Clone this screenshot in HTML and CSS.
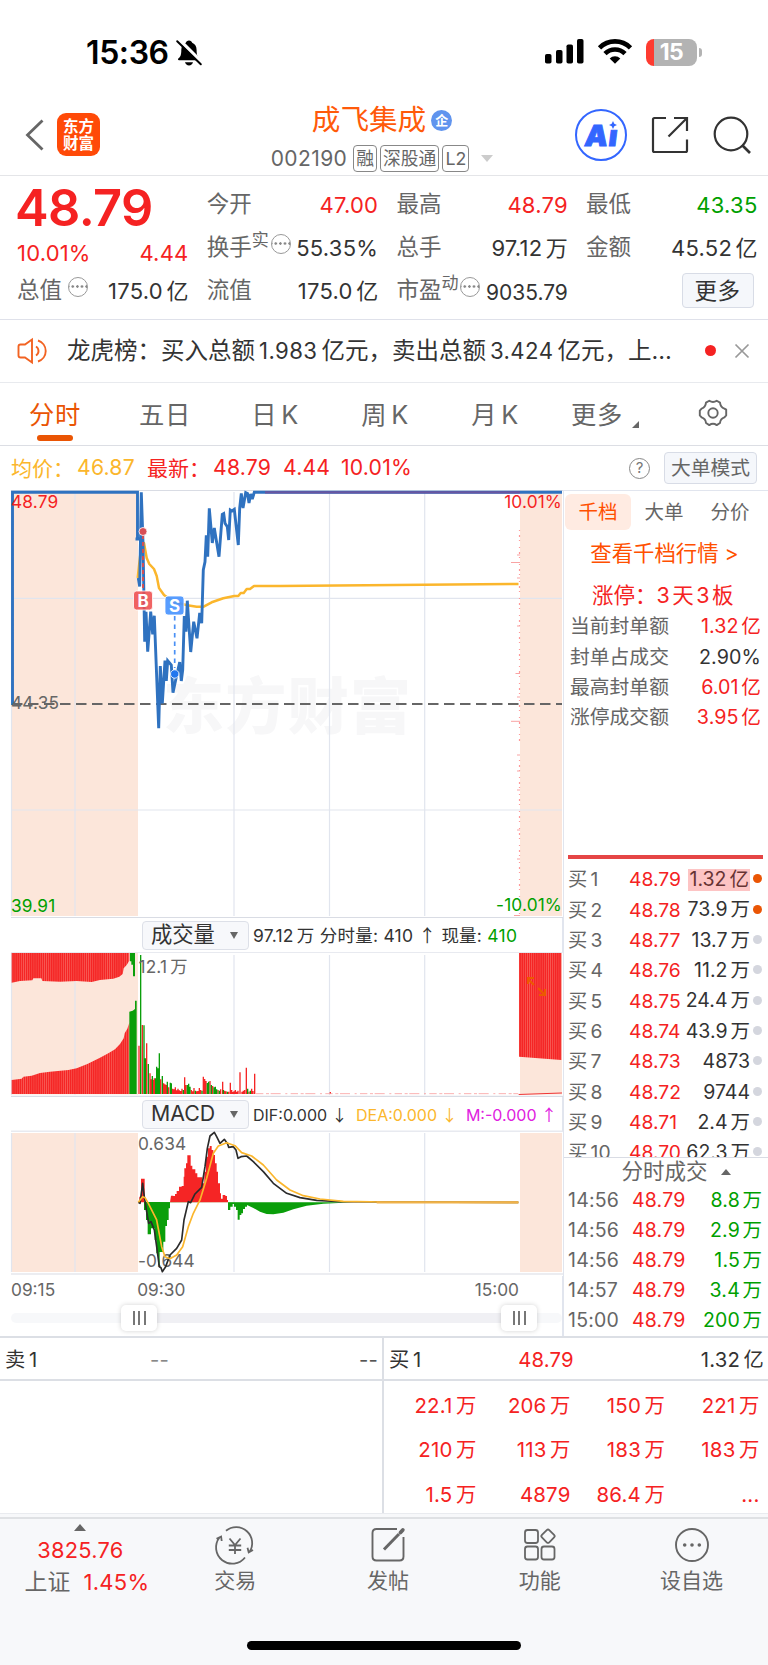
FILE: index.html
```html
<!DOCTYPE html>
<html lang="zh-CN">
<head>
<meta charset="utf-8">
<title>成飞集成 002190</title>
<link rel="stylesheet" href="styles.css">
</head>
<body>
<div class="statusbar">
  <span class="clock">15:36</span>
  <svg class="bell" width="26" height="28" viewBox="0 0 26 28"><path d="M13 1.500c1.700 0 2.900 1 3.200 2.300 3 1.300 4.400 3.900 4.400 7.200 0 5.300 1 7 3 8.600.7.700.3 1.700-.7 1.700H3c-1 0-1.400-1-.7-1.700 2-1.700 3-3.300 3-8.600 0-3.300 1.500-5.900 4.500-7.200C10.100 2.500 11.300 1.500 13 1.500z"/><path d="M9 23.300h8c-.5 2-2 3.200-4 3.200s-3.500-1.200-4-3.200z"/><path d="M3 .5l23 23" stroke="#fff" stroke-width="3.500"/><path d="M1.200 2.200l23.600 23" stroke="#000" stroke-width="2" stroke-linecap="round"/></svg>
  <svg class="signal" width="40" height="26" viewBox="0 0 40 26"><rect x="1" y="15" width="6.500" height="9.500" rx="1.800"/><rect x="12" y="11" width="6.500" height="13.500" rx="1.800"/><rect x="22.500" y="5.500" width="6.500" height="19" rx="1.800"/><rect x="33" y="0" width="6.500" height="24.500" rx="1.800"/></svg>
  <svg class="wifi" width="36" height="26" viewBox="0 0 36 26"><path d="M2.500 8.800a22 22 0 0 1 31 0M8 14.600a14.200 14.200 0 0 1 20 0" fill="none" stroke="#000" stroke-width="4.600"/><path d="M18 24.800l-5.300-5.400a7.600 7.600 0 0 1 10.600 0z"/></svg>
  <span class="battery"><b>15</b></span><span class="battery-cap"></span>
</div>

<header class="header">
  <svg class="back" width="20" height="34" viewBox="0 0 20 34"><path d="M17.500 2.500L2.500 17l15 14.500" fill="none" stroke="#666" stroke-width="2.800"/></svg>
  <div class="logo"><span>东方</span><span>财富</span></div>
  <div class="stock">
    <div class="stock-name"><span>成飞集成</span><span class="corp">企</span></div>
    <div class="stock-code"><span class="code">002190</span><span class="tag">融</span><span class="tag">深股通</span><span class="tag">L2</span><i class="caret"></i></div>
  </div>
  <div class="ai"><span class="ai-text">Aı</span><svg width="8" height="8" viewBox="0 0 8 8"><path d="M4 0l1.300 2.700L8 4 5.300 5.300 4 8 2.700 5.300 0 4l2.700-1.300z" fill="#3366ff"/></svg></div>
  <svg class="share" width="38" height="38" viewBox="0 0 38 38"><path d="M15 2H3.500Q2 2 2 3.500v31Q2 36 3.500 36h31q1.500 0 1.500-1.500V23.500M23 2h13v13M36 2L17.500 20.500" fill="none" stroke="#333" stroke-width="2.200"/></svg>
  <svg class="search" width="38" height="38" viewBox="0 0 38 38"><circle cx="18" cy="18" r="16.300" fill="none" stroke="#333" stroke-width="2.200"/><path d="M29 29l8 8" stroke="#333" stroke-width="2.600"/></svg>
</header>

<section class="quote">
  <div class="qcol">
    <div class="price">48.79</div>
    <div class="chg red"><span>10.01%</span><span>4.44</span></div>
    <div class="q"><span class="l">总值<em class="dots"></em></span><span>175.0<i>亿</i></span></div>
  </div>
  <div class="qcol">
    <div class="q"><span class="l">今开</span><span class="red">47.00</span></div>
    <div class="q"><span class="l">换手<sup>实</sup><em class="dots"></em></span><span>55.35%</span></div>
    <div class="q"><span class="l">流值</span><span>175.0<i>亿</i></span></div>
  </div>
  <div class="qcol">
    <div class="q"><span class="l">最高</span><span class="red">48.79</span></div>
    <div class="q"><span class="l">总手</span><span>97.12<i>万</i></span></div>
    <div class="q"><span class="l">市盈<sup>动</sup><em class="dots"></em></span><span class="pe">9035.79</span></div>
  </div>
  <div class="qcol">
    <div class="q"><span class="l">最低</span><span class="green">43.35</span></div>
    <div class="q"><span class="l">金额</span><span>45.52<i>亿</i></span></div>
    <div class="q end"><span class="more">更多</span></div>
  </div>
</section>

<section class="notice">
  <svg width="32" height="26" viewBox="0 0 32 26"><path d="M15 1.500v23l-7-5H3.500q-2 0-2-2v-9q0-2 2-2H8zM19 8.500a5.300 5.300 0 0 1 0 9M21 2.500a11 11 0 0 1 0 21" fill="none" stroke="#f26322" stroke-width="1.900"/></svg>
  <p>龙虎榜：买入总额<i>1.983</i><i>亿元，卖出总额</i><i>3.424</i><i>亿元，上…</i></p>
  <b class="unread"></b>
  <svg class="close" width="16" height="16" viewBox="0 0 16 16"><path d="M1.500 1.500l13 13M14.500 1.500l-13 13" stroke="#999" stroke-width="1.700"/></svg>
</section>

<nav class="tabs">
  <span class="on">分时</span><span>五日</span><span>日<i>K</i></span><span>周<i>K</i></span><span>月<i>K</i></span><span class="tabmore">更多<b></b></span>
  <span class="gear"><svg width="30" height="28" viewBox="0 0 30 28"><path d="M11.300 1.700q3.700 2.600 7.400 0l3.300 1.900q.4 4.600 4.400 6l1.800 1v5.800l-1.800 2q-4 1.300-4.400 5.600l-3.300 2.100q-3.700-2.600-7.400 0L8 24q-.4-4.300-4.400-5.600l-1.800-2v-4.800l1.800-2q4-1.400 4.400-6z" fill="none" stroke="#666" stroke-width="1.900" stroke-linejoin="round"/><circle cx="15" cy="14" r="4.700" fill="none" stroke="#666" stroke-width="1.900"/></svg></span>
</nav>

<div class="info">
  <span class="avg">均价：</span><span class="avg num">46.87</span><span class="red lab">最新：</span><span class="red num">48.79</span><span class="red num n2">4.44</span><span class="red num">10.01%</span>
  <span class="help">?</span><span class="mode">大单模式</span>
</div>

<main class="board">
  <div class="charts">
    <svg class="block" width="563" height="428" viewBox="0 490 563 428">
      <g class="wm"><text x="163" y="729" textLength="248">东方财富</text></g>
      <rect class="pink" x="12" y="492" width="126" height="424"/><rect class="pink" x="520" y="492" width="42" height="424"/>
      <path class="grid" d="M11.500 490v426M75 492v424M234 492v424M329.500 492v424M424.700 492v424M12 598.400h550M12 810h550"/>
      <path class="edge" d="M11 490.500h552M11 917.500h552"/>
      <path d="M519.500 530v214M519.500 760v156" stroke="#f99" stroke-width="1.200" stroke-dasharray="1 4 2 3 1 6"/>
      <path d="M511 562.500h9M515.500 673.500h4.500M511 721.300h9M517 555h3M517 578h3M517 626h3M517 697h3M517 755h3M517 771h3M517 790h3M517 830h3M517 859h3M514 915.500h6" stroke="#f9a3a3" stroke-width="1"/>
      <path d="M12 704h550" stroke="#666" stroke-width="1.800" stroke-dasharray="10.500 5.500"/>
      <path class="avgline" d="M137.700 578l2.300-21 2-14h2l2.700 15 2.600 6 4.700 5 2.700 7 2.300 12 5 7 10 7 13.300 3.300 9.400 1.400h7l8-4.400 11.600-4 11-2.300h4l2.400-3h3l3-4h3.300l4-3H280l238.500-2"/>
      <path class="priceline" d="M12.500 705V492.300H137.500V539H141M137.500 539h-2M138.300 578l1.400 8.600 1.600-94.300 1.700 50 1.700 99.400 1.300-30 1.700 40 3-40 2 22.600 1.600-18.600L158.700 728.300 160.300 666 162.300 703.300 165 660.700 166.300 681 167.700 660.700 171.300 665 173 692.700 176.300 677 179.700 662 181.300 681 182.700 670 184.300 616 186 631.700 187.300 600.700 190.700 652 193.700 621.700 197 638.300 199.700 613 201.700 623.300 203.300 570 205 561.700 206.300 535.300 207.700 556.700 209.300 508.300 212.300 543 214.300 528 219 556.700 222.300 514.300 223.700 513.500 225 523.300 227.300 526.700 228.700 540 230.300 510 232 511 234.300 509.300 238.300 545 239.700 508 241.300 493.300 243 508 245.700 492.700 247.500 493.500 249 503 250.700 494 252.300 499 254.300 492.300H562"/>
      <path d="M265 492.300H520" stroke="#6a55a0" stroke-width="2.200"/>
      <path d="M143 535v56" stroke="#e04b4b" stroke-width="1.800" stroke-dasharray="4 3"/><circle cx="143" cy="531.500" r="4" fill="#d84e55" stroke="#fff" stroke-width=".8"/>
      <path d="M174.700 616v52" stroke="#4a90f5" stroke-width="1.700" stroke-dasharray="4.500 4"/><circle cx="174.700" cy="674" r="4.200" fill="#2277ee" stroke="#fff" stroke-width=".8"/>
      <rect x="133.500" y="591" width="19" height="19" rx="3" fill="#ee4f4f" fill-opacity=".88" stroke="#fff" stroke-width=".8"/><text class="mk" x="143" y="607.300">B</text>
      <rect x="165" y="596" width="19" height="19" rx="3" fill="#4a95ff" fill-opacity=".92" stroke="#fff" stroke-width=".8"/><text class="mk" x="174.500" y="612.300">S</text>
      <text class="ax r" x="11" y="507.700">48.79</text><text class="ax" x="11" y="709">44.35</text><text class="ax g" x="11" y="911.500">39.91</text>
      <text class="ax r e" x="562" y="508">10.01%</text><text class="ax g e" x="562" y="911.300">-10.01%</text>
    </svg>

    <div class="chead"><span class="select">成交量<b></b></span><span class="vtext">97.12<i>万</i> 分时量: 410 <u>↑</u> 现量: <span class="green">410</span></span></div>

    <svg class="block" width="563" height="145" viewBox="0 952 563 145">
      <defs>
        <pattern id="stripe" width="6.300" height="30" patternUnits="userSpaceOnUse"><rect width="6.300" height="30" fill="#f52525"/><rect width="1.500" height="30" fill="#f97068"/></pattern>
      </defs>
      <rect class="pink" x="12" y="953" width="126" height="141.500"/><rect class="pink" x="520" y="953" width="42" height="141.500"/>
      <path class="grid" d="M11.500 953v142M75 953v142M234 955v140M329.500 955v140M424.700 955v140"/>
      <path d="M11 952.500h552" stroke="#e8eaf0"/><path class="edge" d="M11 1096.300h552"/>
      <g transform="translate(0 900) scale(.33333)">
        <path fill="url(#stripe)" d="M35 159H388V182L380 195 371 205 368 222 358 230 340 236 300 240 275 246 230 243 180 245 127 243 124 235H100L97 241 60 243 35 248zM35 582V540L65 536 70 530 95 527 120 519 150 515 205 510 230 505 262 492 300 473 325 460 345 448 360 432 371 415 374 400 382 386 388 368V582zM1557 159h127V480l-127-10z"/>
        <path d="M390 159h15v70h-6v-35h-5v-10h-4zM388 582V335l10-3 7-5V302h5V582z" fill="#0a9e0a"/>
        <path stroke="#f52525" stroke-width="4" fill="none" d="M417 582V437M427 582V375M440 582V430M450 582V520M454 582V538M459 582V540M463 582V535M482 582V538M491 582V550M495 582V553M499 582V555M506 582V562M518 582V566M522 582V568M526 582V562M530 582V571M534 582V566M538 582V571M542 582V573M546 582V566M554 582V532M558 582V555M574 582V570M578 582V574M582 582V564M590 582V574M594 582V573M598 582V564M602 582V570M610 582V530M614 582V537M618 582V543M630 582V543M638 582V558M654 582V570M662 582V568M668 582V545M674 582V572M678 582V574M686 582V575M691 582V548M695 582V570M698 582V576M702 582V574M706 582V570M710 582V575M714 582V572M720 582V517M726 582V575M730 582V572M734 582V570M739 582V503M747 582V575M755 582V566M759 582V573M764 582V521M991 582V576"/>
        <path stroke="#0a9e0a" stroke-width="4" fill="none" d="M422 582V165M432 582V376M436 582V475M445 582V492M457 582V528M467 582V535M470 582V500M474 582V505M478 582V460M487 582V528M502 582V545M511 582V548M514 582V550M550 582V570M562 582V555M566 582V551M570 582V560M586 582V572M606 582V572M622 582V549M626 582V545M634 582V555M642 582V562M646 582V560M650 582V568M658 582V572M670 582V570M682 582V575M743 582V566M751 582V572"/>
        <path d="M768 581H1555" stroke="#f9a0a0" stroke-width="2.500" stroke-dasharray="22 8 9 5 30 14 6 10"/>
        <path d="M1556 583.500L1686 579" stroke="#e33" stroke-width="3"/>
      </g>
      <path d="M534 985l-6-6M528 984v-6h6M538 988l7 7M545 989v6h-6" fill="none" stroke="#ec5a00" stroke-width="2"/>
      <text class="ax" x="138.500" y="972.500">12.1<tspan dx="3">万</tspan></text>
    </svg>

    <div class="chead"><span class="select">MACD<b></b></span><span class="mtext"><span>DIF:0.000 <u>↓</u></span><span class="dea">DEA:0.000 <u>↓</u></span><span class="mm">M:-0.000 <u>↑</u></span></span></div>

    <svg class="block" width="563" height="145" viewBox="0 1131 563 145">
      <rect class="pink" x="12" y="1133" width="126" height="139"/><rect class="pink" x="520" y="1133" width="42" height="139"/>
      <path class="grid" d="M11.500 1133v139M75 1133v139M234 1133v139M329.500 1133v139M424.700 1133v139"/>
      <path d="M11 1131.300h552" stroke="#e8eaf0" stroke-width="1.400"/><path class="edge" d="M11 1274h552"/>
      <text class="ax" x="138" y="1150">0.634</text><text class="ax" x="138" y="1266.500">-0.644</text>
      <g transform="translate(0 900) scale(.33333)" stroke-linejoin="round">
        <path fill="#f52525" d="M418 907V890H423V836H434V907zM510 907L513 887H520V888H525V882H530V873H537V860H545V858H551V830H553V805H558V790H562V766H572V797H577V808H586V820H592V832H607V850H613V815H618V770H624V745H629V738H635V750H640V765H645V790H650V815H654V850H660V880H663V896H668V885H676V888H681V900H684V907z"/>
        <path fill="#0a9e0a" d="M432 906V930H438V960H443V1003H453V985H464V1020H469V1060H474V1095H479V1056H490V1025H496V978H501V960H506V925H510V907H684V930H691V920H698V912H702V920H708V930H713V959H719V945H724V940H729V927H735V920H741V915L760 924 780 935 800 942 820 943 850 938 880 928 920 917 970 911 1060 907z"/>
        <path fill="none" stroke="#2b2b2b" stroke-width="5" d="M415 907L420 910 428 850 433 890 440 935 446 970 453 965 463 990 470 1040 478 1100 483 1103 487 1115 497 1100 510 1065 530 1045 545 1020 552 960 565 905 572 908 585 882 605 862 615 800 622 745 630 708 643 697 650 710 660 730 673 718 683 732 686 742 700 740 708 750 714 775 723 770 740 768 760 785 790 815 820 850 860 880 900 893 950 901 1020 905 1555 907"/>
        <path fill="none" stroke="#fbb62c" stroke-width="5" d="M415 907L428 890 435 893 445 910 470 960 485 1040 495 1070 510 1076 530 1065 548 1040 565 980 580 940 600 900 620 835 640 760 655 738 680 728 705 737 725 758 755 768 790 795 830 840 870 870 910 887 960 897 1030 904 1150 906 1555 907"/>
        <path fill="none" stroke="#efb24a" stroke-width="7" d="M1130 907H1555"/>
      </g>
    </svg>
    <div class="times"><span>09:15</span><span>09:30</span><span>15:00</span></div>
    <div class="slider"><span class="h1"></span><span class="h2"></span></div>
  </div>

  <aside class="side">
    <div class="stabs"><span class="on">千档</span><span>大单</span><span>分价</span></div>
    <div class="link">查看千档行情 &gt;</div>
    <div class="limit red">涨停：3<i>天</i><i>3</i><i>板</i></div>
    <div class="kv"><span>当前封单额</span><b class="red">1.32<i>亿</i></b></div>
    <div class="kv"><span>封单占成交</span><b>2.90%</b></div>
    <div class="kv"><span>最高封单额</span><b class="red">6.01<i>亿</i></b></div>
    <div class="kv"><span>涨停成交额</span><b class="red">3.95<i>亿</i></b></div>
    <div class="redbar"></div>
    <div class="book">
      <div class="o"><span>买<i>1</i></span><b>48.79</b><em class="hl">1.32<i>亿</i></em><s class="hot"></s></div>
      <div class="o"><span>买<i>2</i></span><b>48.78</b><em>73.9<i>万</i></em><s class="hot"></s></div>
      <div class="o"><span>买<i>3</i></span><b>48.77</b><em>13.7<i>万</i></em><s></s></div>
      <div class="o"><span>买<i>4</i></span><b>48.76</b><em>11.2<i>万</i></em><s></s></div>
      <div class="o"><span>买<i>5</i></span><b>48.75</b><em>24.4<i>万</i></em><s></s></div>
      <div class="o"><span>买<i>6</i></span><b>48.74</b><em>43.9<i>万</i></em><s></s></div>
      <div class="o"><span>买<i>7</i></span><b>48.73</b><em>4873</em><s></s></div>
      <div class="o"><span>买<i>8</i></span><b>48.72</b><em>9744</em><s></s></div>
      <div class="o"><span>买<i>9</i></span><b>48.71</b><em>2.4<i>万</i></em><s></s></div>
      <div class="o"><span>买<i>10</i></span><b>48.70</b><em>62.3<i>万</i></em><s></s></div>
    </div>
    <div class="thead">分时成交<b></b></div>
    <div class="t"><span>14:56</span><b>48.79</b><em>8.8<i>万</i></em></div>
    <div class="t"><span>14:56</span><b>48.79</b><em>2.9<i>万</i></em></div>
    <div class="t"><span>14:56</span><b>48.79</b><em>1.5<i>万</i></em></div>
    <div class="t"><span>14:57</span><b>48.79</b><em>3.4<i>万</i></em></div>
    <div class="t"><span>15:00</span><b>48.79</b><em>200<i>万</i></em></div>
  </aside>
</main>

<section class="queue">
  <div class="half">
    <div class="qh"><span>卖<i>1</i></span><span class="dash">--</span><span class="dash d2">--</span></div>
  </div>
  <div class="half">
    <div class="qh"><span>买<i>1</i></span><span class="red">48.79</span><span>1.32<i>亿</i></span></div>
    <div class="cells red">
      <span>22.1<i>万</i></span><span>206<i>万</i></span><span>150<i>万</i></span><span>221<i>万</i></span>
      <span>210<i>万</i></span><span>113<i>万</i></span><span>183<i>万</i></span><span>183<i>万</i></span>
      <span>1.5<i>万</i></span><span>4879</span><span>86.4<i>万</i></span><span>...</span>
    </div>
  </div>
</section>

<footer class="nav">
  <div class="index"><b class="up"></b><span class="red">3825.76</span><span>上证<i class="red">1.45%</i></span></div>
  <div class="ni"><svg width="40" height="36" viewBox="0 0 40 36"><g fill="none" stroke="#666" stroke-width="1.800"><path d="M11 3.800A16 16 0 0 1 34.500 25M30 30.500A16 16 0 0 1 4.500 10.500M1.500 11.800l4.600-2.300 .6 4.500M38 23l-4.300 2.300-1.200-4.500"/><path d="M14.500 11.500l5.500 6.500 5.500-6.500M13.800 18.500h12.400M13.800 23h12.400M20 18v9"/></g></svg><span>交易</span></div>
  <div class="ni"><svg width="40" height="36" viewBox="0 0 40 36"><path d="M29 2H8.500Q4.500 2 4.500 6v23.500q0 4 4 4h23q4 0 4-4V10" fill="none" stroke="#666" stroke-width="1.900"/><path d="M16 22.500L31 7" stroke="#666" stroke-width="3"/><path d="M32.500 5.500l2.300-2.500" stroke="#666" stroke-width="3.800" stroke-linecap="round"/></svg><span>发帖</span></div>
  <div class="ni"><svg width="40" height="36" viewBox="0 0 40 36"><g fill="none" stroke="#666" stroke-width="1.800"><rect x="5" y="3" width="13" height="13" rx="2.500"/><rect x="5" y="19.500" width="13" height="13" rx="2.500"/><rect x="21.500" y="19.500" width="13" height="13" rx="2.500"/><rect x="22.800" y="4" width="10.400" height="10.400" rx="1.800" transform="rotate(45 28 9.200)"/></g></svg><span>功能</span></div>
  <div class="ni"><svg width="40" height="36" viewBox="0 0 40 36"><circle cx="20" cy="18" r="16" fill="none" stroke="#666" stroke-width="1.900"/><g fill="#666"><circle cx="12.700" cy="18" r="1.800"/><circle cx="20" cy="18" r="1.800"/><circle cx="27.300" cy="18" r="1.800"/></g></svg><span>设自选</span></div>
  <div class="home"></div>
</footer>
</body>
</html>
```

FILE: styles.css
```css
* { box-sizing: border-box; }
body { margin: 0; width: 768px; height: 1665px; overflow: hidden; background: #fff; color: #333; font-family: Inter, "Noto Sans CJK SC", sans-serif; font-size: 20px; line-height: 1; white-space: nowrap; }
i, em, u, s { font-style: normal; text-decoration: none; }
i { margin-left: .17em; }
p { margin: 0; }
svg { display: block; flex: none; overflow: visible; }
.red { color: #f52222; }
.green { color: #00a000; }

.statusbar { height: 96px; display: flex; align-items: center; padding: 8px 0 0 86px; }
.clock { width: 90px; padding-top: 2px; font-size: 32px; font-weight: 600; color: #000; letter-spacing: -.4px; }
.bell { margin-top: 2px; }
.signal { margin-left: 342px; }
.wifi { margin-left: 13px; }
.battery { margin-left: 13px; width: 51px; height: 27px; border-radius: 8px; background: linear-gradient(90deg, #fe3b30 8px, #b3b3b3 8px); color: #fff; font-size: 23px; text-align: center; line-height: 27px; letter-spacing: -.5px; }
.battery b { font-weight: 700; }
.battery-cap { width: 3px; height: 9px; margin-left: 2px; border-radius: 0 4px 4px 0; background: #b3b3b3; }

.header { height: 80px; display: flex; align-items: flex-start; border-bottom: 1px solid #e4e5e8; }
.back { margin: 22px 0 0 25px; }
.logo { margin: 17px 0 0 12px; width: 43px; height: 43px; border-radius: 9px; background: #ff4a08; color: #fff; font: 700 15.500px/17px "Noto Sans CJK SC", sans-serif; display: flex; flex-direction: column; align-items: center; padding-top: 4px; }
.stock { width: 300px; margin-left: 132px; display: flex; flex-direction: column; align-items: center; padding-top: 8px; }
.stock-name { display: flex; align-items: center; font-size: 28.600px; height: 32px; color: #ff5a0a; }
.corp { width: 21px; height: 21px; margin-left: 5px; border-radius: 50%; background: #6094ee; color: #fff; font-size: 13px; font-weight: 700; line-height: 20px; text-align: center; }
.stock-code { display: flex; align-items: center; height: 28px; margin-top: 8px; color: #666; }
.code { font-size: 21px; margin-right: 6px; letter-spacing: .4px; }
.tag { height: 27px; border: 1.500px solid #888; border-radius: 4px; padding: 0 2px; margin-right: 3px; font-size: 17.800px; line-height: 25px; }
.caret { border: 6px solid transparent; border-top: 7px solid #ccc; border-bottom: 0; margin-left: 9px; }
.ai { position: relative; width: 52px; height: 52px; margin-left: 43px; margin-top: 13px; border: 2.500px solid #3366ff; border-radius: 50%; color: #3366ff; font: 900 29px/49px Inter, sans-serif; }
.ai-text { display: block; margin-left: 8px; transform: skewX(-7deg); letter-spacing: 1px; -webkit-text-stroke: 1px #3366ff; }
.ai svg { position: absolute; right: 8px; top: 10px; }
.share { margin: 20px 0 0 24px; }
.search { margin: 20px 0 0 24px; }

.quote { height: 144px; display: flex; gap: 18.200px; padding: 7px 0 0 17px; border-bottom: 1px solid #dfe1ea; }
.qcol { width: 171.500px; font-size: 22px; }
.q { height: 43px; display: flex; align-items: center; justify-content: space-between; letter-spacing: .25px; }
.q i { font-size: 22px; margin-left: 3.500px; letter-spacing: 0; }
.l { display: flex; align-items: center; color: #666; font-size: 22.500px; letter-spacing: 0; }
.l sup { font-size: 17px; line-height: 1; margin-bottom: 14px; }
.dots { width: 20px; height: 20px; margin: 0 0 7px 2px; border: 1.500px solid #999; border-radius: 50%; background: radial-gradient(circle, #888 1px, transparent 1.500px) 0 0 / 4.600px 17px; background-position: 1.500px 0; background-repeat: repeat-x; }
.qcol:first-child .dots { margin-left: 6px; }
.pe { font-size: 21px; padding-top: 3px; letter-spacing: 0; }
.price { height: 53px; font-size: 50.500px; font-weight: 600; line-height: 50px; color: #f52222; letter-spacing: -.6px; margin-left: -2px; }
.chg { height: 33px; display: flex; justify-content: space-between; align-items: center; letter-spacing: .2px; padding-top: 1px; }
.end { justify-content: flex-end; padding-right: 4px; }
.more { width: 72px; height: 35px; line-height: 33px; text-align: center; border: 1px solid #d8dce6; border-radius: 4px; background: #f5f7fb; font-size: 22.500px; letter-spacing: .5px; }

.notice { height: 63px; display: flex; align-items: center; padding: 0 18px 1px 17px; border-bottom: 1.500px solid #e8eaee; }
.notice p { width: 622px; margin-left: 18px; font-size: 23.500px; }
.notice i { margin-left: 4px; }
.notice i:nth-child(odd) { font-size: 22.200px; letter-spacing: .4px; }
.unread { width: 11px; height: 11px; border-radius: 50%; background: #f52222; margin-left: 18px; }
.close { margin-left: 18px; }

.tabs { height: 63px; display: grid; grid-template-columns: repeat(7, 110px); border-bottom: 1px solid #dcdee4; color: #666; font-size: 25.300px; }
.tabs > span { display: flex; align-items: center; justify-content: center; padding-top: 1px; position: relative; letter-spacing: .6px; }
.tabs > .gear { padding: 0 4px 2px 0; }
.tabs i { margin-left: 4px; }
.tabs .on { color: #ea5504; }
.tabs .on::after { content: ""; position: absolute; left: 37px; top: 52px; width: 36px; height: 5.500px; border-radius: 3px; background: #ea5504; }
.tabmore b { border: solid transparent; border-width: 0 0 7px 7px; border-bottom-color: #666; margin: 19px 0 0 9px; }

.info { height: 44px; display: flex; align-items: center; padding: 0 11px 0 11px; font-size: 21px; }
.avg { color: #fbb62c; }
.info .num { width: 70px; font-size: 21.200px; letter-spacing: .2px; }
.info .avg { width: 66px; }
.info .avg.num { width: 70px; }
.lab { width: 66px; }
.info .n2 { width: 58px; }
.help { margin-left: auto; width: 21px; height: 21px; border: 1.500px solid #888; border-radius: 50%; color: #777; font-size: 15px; line-height: 18px; text-align: center; }
.mode { margin-left: 14px; width: 93px; height: 32px; line-height: 30px; text-align: center; border: 1px solid #d8dce6; border-radius: 4px; background: #f5f7fb; color: #666; font-size: 19.800px; }

.board { height: 846px; display: flex; }
.charts { width: 563px; }
.pink { fill: #fce6da; }
.grid { stroke: #e1e5ee; stroke-width: 1.200; fill: none; }
.edge { stroke: #d9dce4; stroke-width: 1.200; fill: none; }
.wm text { font: 900 61px "Noto Sans CJK SC", sans-serif; fill: #f7f7f8; }
.avgline { fill: none; stroke: #fbb62c; stroke-width: 2.500; stroke-linejoin: round; }
.priceline { fill: none; stroke: #2f72c0; stroke-width: 2.900; stroke-linejoin: miter; stroke-miterlimit: 3; }
.mk { font: 700 17px Inter, sans-serif; fill: #fff; text-anchor: middle; }
.ax { font-size: 17.300px; letter-spacing: .15px; fill: #666; }
.r { fill: #f52222; }
.g { fill: #00a000; }
.e { text-anchor: end; }
.chead { height: 34px; display: flex; align-items: center; padding-left: 142px; border-right: 1px solid #e1e5ee; }
.select { flex: none; width: 107px; height: 29px; display: flex; align-items: center; padding-left: 8px; border: 1px solid #dde0e8; border-radius: 4px; background: #f7f8fb; font-size: 21.300px; position: relative; }
.select b { position: absolute; right: 10px; top: 10px; border: 4.500px solid transparent; border-top: 7.500px solid #666; border-bottom: 0; }
.vtext { margin-left: 4px; font-size: 17.500px; letter-spacing: .25px; padding-top: 1px; }
.mtext { margin-left: 4px; width: 304px; display: flex; justify-content: space-between; font-size: 16px; }
u { font-family: "Noto Sans CJK SC", sans-serif; }
.dea { color: #fbb62c; }
.mm { color: #e020e0; }
.times { height: 24px; display: flex; align-items: center; padding: 3px 43px 0 11px; font-size: 17.300px; color: #666; border-right: 1px solid #e1e5ee; }
.times span:nth-child(2) { margin: 0 auto 0 82px; }
.slider { height: 36px; display: flex; align-items: center; padding: 0 0 0 11px; position: relative; border-right: 1px solid #e1e5ee; }
.slider::before { content: ""; width: 551px; height: 10px; border-radius: 5px; background: linear-gradient(90deg, #f7f8fa 120px, #f0f0f4 120px, #f0f0f4 510px, #f7f8fa 510px); }
.slider span { position: absolute; left: 121px; top: 5px; width: 36px; height: 26px; border-radius: 5px; box-shadow: 0 0 5px rgba(0,0,0,.18); display: flex; align-items: center; justify-content: center; background: #fff; }
.slider span::before { content: ""; width: 13px; height: 14px; background: repeating-linear-gradient(90deg, #777 0 2px, transparent 2px 5.500px); }
.slider .h2 { left: 501px; }

.side { width: 205px; border-left: 1px solid #e1e5ee; border-top: 1px solid #e1e5ee; }
.stabs { display: flex; height: 42px; padding: 3px 0 0 1px; font-size: 19.500px; color: #666; }
.stabs span { width: 66px; height: 36px; line-height: 37px; text-align: center; border-radius: 6px; }
.stabs .on { background: #ffebe2; color: #ff5000; }
.link { height: 41px; line-height: 41px; text-align: center; color: #ff5000; font-size: 21.400px; padding-right: 3px; }
.limit { height: 38px; line-height: 42px; padding-left: 28px; font-size: 21.500px; }
.limit i { margin-left: 2.500px; }
.kv { height: 30.300px; display: flex; align-items: center; justify-content: space-between; padding: 0 7px 0 6px; color: #666; font-size: 19.800px; }
.kv b { color: #333; font-weight: 400; font-size: 19.700px; letter-spacing: .1px; }
.kv b i { margin-left: 2.500px; }
.kv b.red { color: #f52222; }
.redbar { height: 3.500px; margin: 122px 5px 0 4px; background: #e54545; }
.book { height: 298.500px; padding-top: 6px; overflow: hidden; }
.o { height: 30.350px; display: flex; align-items: center; padding-left: 4px; font-size: 19.300px; }
.o span, .t span { color: #666; }
.o b, .t b { font-weight: 400; color: #f52222; }
.o span { width: 54px; flex: none; margin-right: 7px; }
.o b { width: 53px; flex: none; }
.o em { margin-left: auto; font-size: 19.500px; }
.o em i { margin-left: 3px; }
.hl { background: #fdc4c4; color: #633; padding: 1px 1px 1px 2px; }
.o s { width: 9px; height: 9px; border-radius: 50%; background: #d4d6de; margin: 0 6px 2px 3px; flex: none; }
.o s.hot { background: #ea5504; }
.thead { height: 29px; border-top: 1.500px solid #d9dce4; display: flex; align-items: center; justify-content: center; padding: 0 0 0 20px; font-size: 21.500px; color: #666; }
.thead b { border: 5px solid transparent; border-bottom: 6px solid #666; border-top: 0; margin-left: 13px; }
.t { height: 30px; display: flex; align-items: center; padding: 0 6px 0 4px; font-size: 19.500px; letter-spacing: .2px; }
.t span { width: 64px; }
.t em { margin-left: auto; color: #00a000; }
.t i { margin-left: 2.500px; letter-spacing: 0; }

.queue { height: 177px; display: flex; border-top: 2px solid #dcdfe5; }
.half { width: 50%; height: 175px; }
.half:first-child { border-right: 2px solid #dcdfe5; }
.qh { height: 43px; display: grid; grid-template-columns: 110px 1fr 110px; align-items: center; padding: 3px 4px 0 5px; border-bottom: 2px solid #dcdfe5; font-size: 20.300px; letter-spacing: .2px; }
.qh span:nth-child(2) { text-align: center; padding-right: 64px; }
.half:last-child .qh span:nth-child(2) { padding-right: 61px; }
.qh span:nth-child(3) { text-align: right; }
.dash { color: #888; }
.qh .d2 { color: #555; }
.cells { display: grid; grid-template-columns: 92.500px 94px 94.500px 94.500px; grid-auto-rows: 44.300px; padding-top: 3px; align-items: center; text-align: right; font-size: 20.400px; letter-spacing: .2px; }

.nav { height: 152px; border-top: 1px solid #e9ebef; background: #f7f8fa; position: relative; display: flex; color: #666; font-size: 21px; }
.nav::before { content: ""; position: absolute; left: 0; top: 3px; width: 100%; height: 1.500px; background: #dfe1e4; }
.index { width: 161px; display: flex; flex-direction: column; align-items: center; }
.index span { font-size: 21.800px; height: 31px; line-height: 31px; letter-spacing: .25px; }
.index span + span { font-size: 22.800px; padding-left: 13px; }
.index i { font-size: 22px; margin-left: 13px; }
.up { border: 6.500px solid transparent; border-bottom: 7px solid #666; border-top: 0; margin: 10px 0 4px; }
.ni { width: 152px; display: flex; flex-direction: column; align-items: center; padding: 13px 1px 0 0; gap: 5px; }
.ni:nth-child(2) { padding-right: 3px; }
.ni span { line-height: 25px; }
.home { position: absolute; left: 247px; top: 127px; width: 274px; height: 9px; border-radius: 5px; background: #000; }
```
